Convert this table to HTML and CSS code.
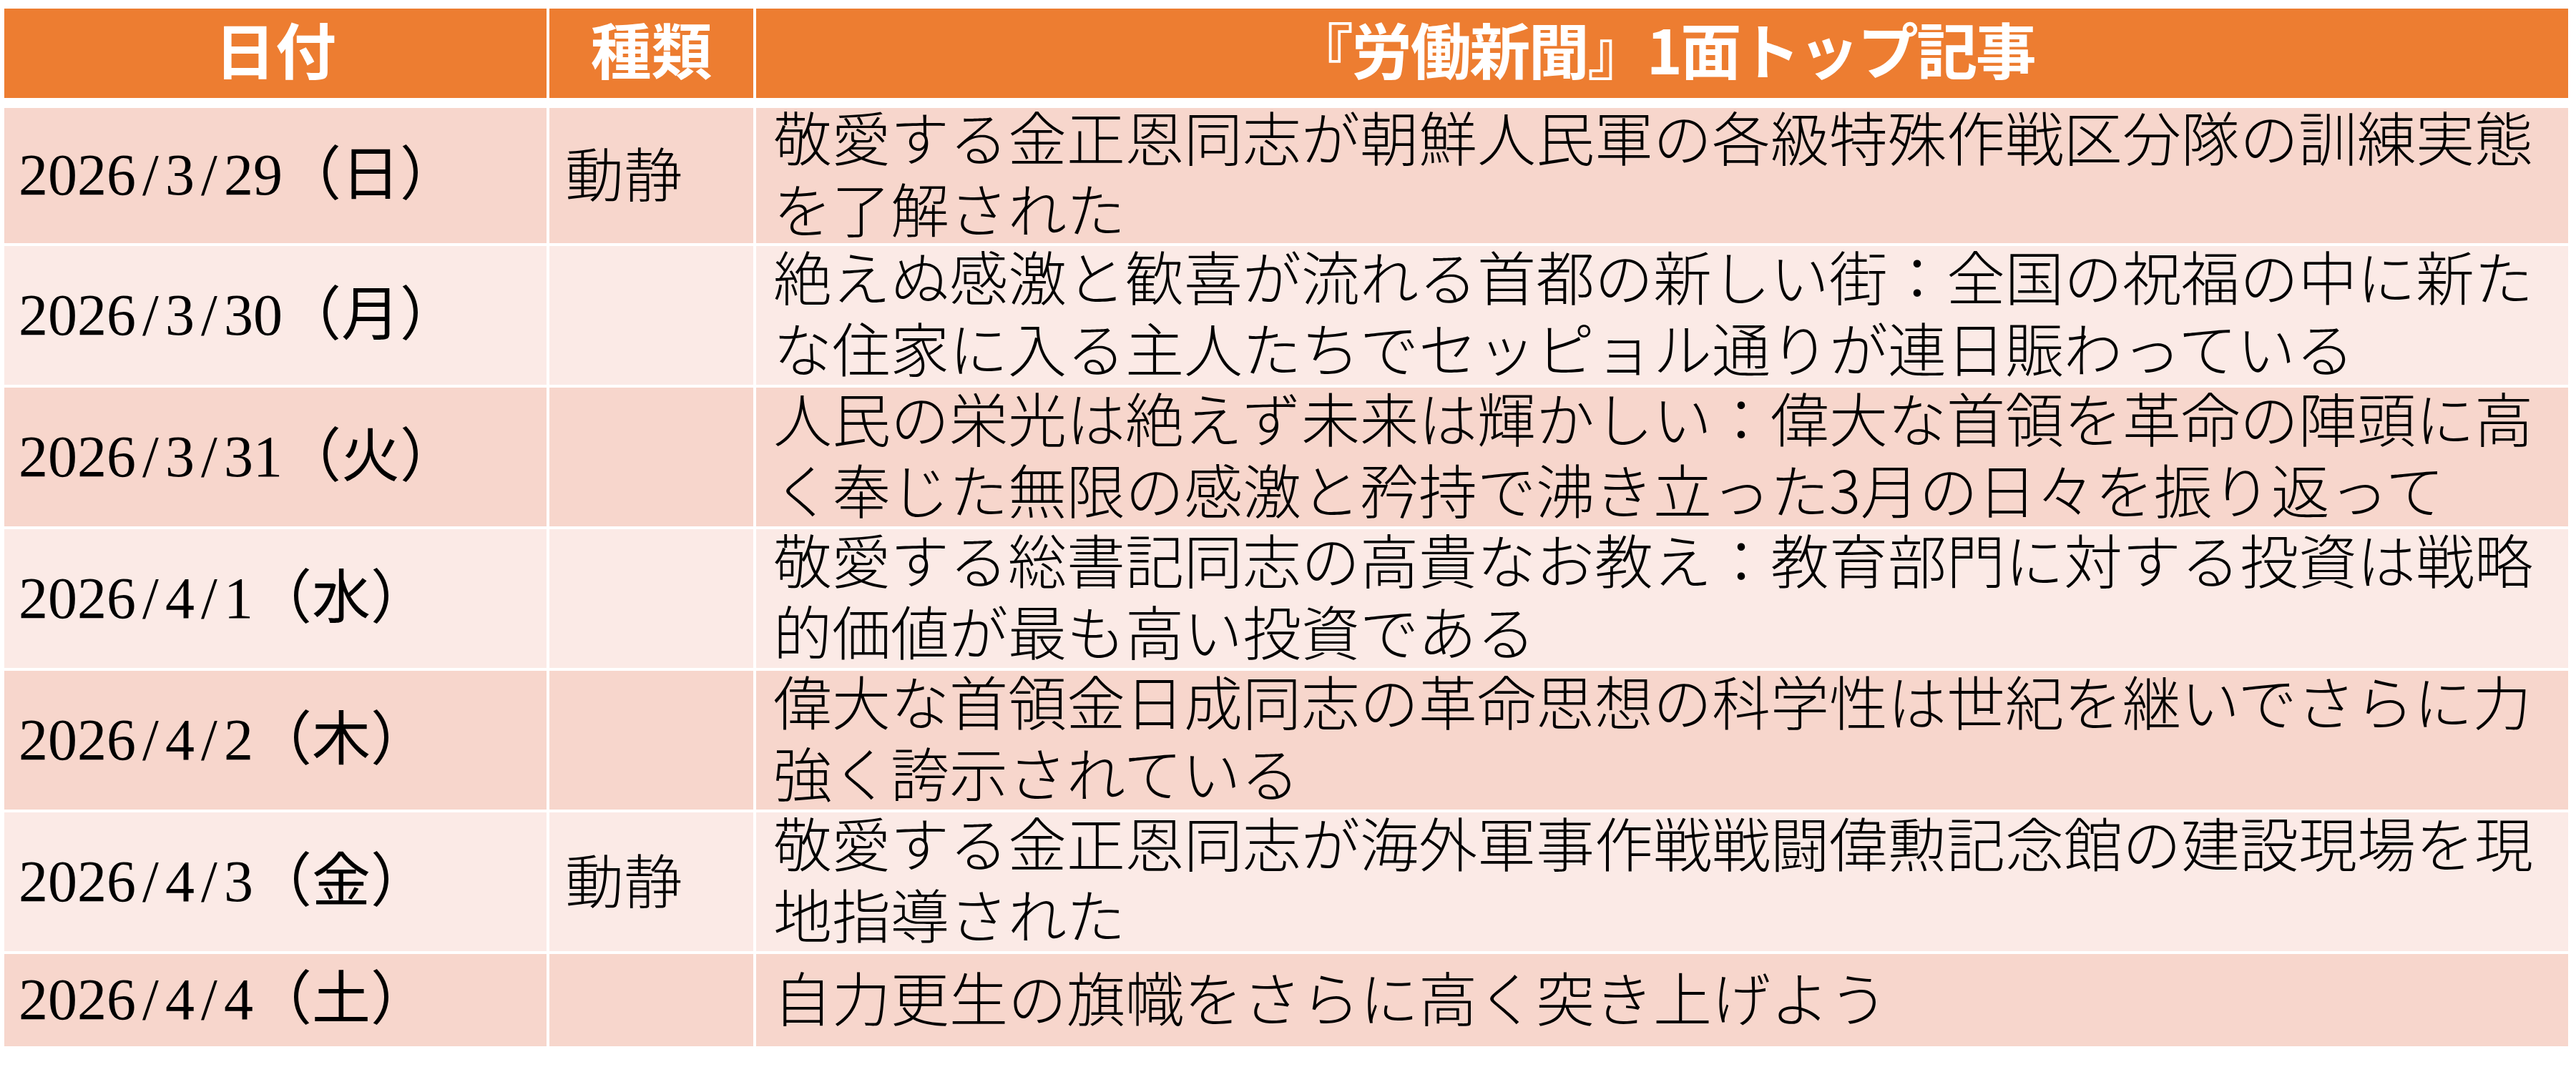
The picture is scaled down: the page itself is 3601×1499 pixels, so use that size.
FILE: index.html
```html
<!DOCTYPE html>
<html lang="ja">
<head>
<meta charset="utf-8">
<title>『労働新聞』1面トップ記事</title>
<link rel="stylesheet" href="styles.css">
</head>
<body>
<div class="table">
  <div class="th">日付</div>
  <div class="th">種類</div>
  <div class="th th-title">『労働新聞』1面トップ記事</div>

  <div class="td date odd">2026<span class="sl">/</span>3<span class="sl">/</span>29（日）</div>
  <div class="td kind odd">動静</div>
  <div class="td title odd">敬愛する金正恩同志が朝鮮人民軍の各級特殊作戦区分隊の訓練実態を了解された</div>

  <div class="td date even">2026<span class="sl">/</span>3<span class="sl">/</span>30（月）</div>
  <div class="td kind even"></div>
  <div class="td title even">絶えぬ感激と歓喜が流れる首都の新しい街：全国の祝福の中に新たな住家に入る主人たちでセッピョル通りが連日賑わっている</div>

  <div class="td date odd">2026<span class="sl">/</span>3<span class="sl">/</span>31（火）</div>
  <div class="td kind odd"></div>
  <div class="td title odd">人民の栄光は絶えず未来は輝かしい：偉大な首領を革命の陣頭に高く奉じた無限の感激と矜持で沸き立った3月の日々を振り返って</div>

  <div class="td date even">2026<span class="sl">/</span>4<span class="sl">/</span>1（水）</div>
  <div class="td kind even"></div>
  <div class="td title even">敬愛する総書記同志の高貴なお教え：教育部門に対する投資は戦略的価値が最も高い投資である</div>

  <div class="td date odd">2026<span class="sl">/</span>4<span class="sl">/</span>2（木）</div>
  <div class="td kind odd"></div>
  <div class="td title odd">偉大な首領金日成同志の革命思想の科学性は世紀を継いでさらに力強く誇示されている</div>

  <div class="td date even">2026<span class="sl">/</span>4<span class="sl">/</span>3（金）</div>
  <div class="td kind even">動静</div>
  <div class="td title even">敬愛する金正恩同志が海外軍事作戦戦闘偉勲記念館の建設現場を現地指導された</div>

  <div class="td date odd">2026<span class="sl">/</span>4<span class="sl">/</span>4（土）</div>
  <div class="td kind odd"></div>
  <div class="td title odd">自力更生の旗幟をさらに高く突き上げよう</div>
</div>
</body>
</html>
```

FILE: styles.css
```css
html, body {
  margin: 0;
  background: #ffffff;
}

body {
  padding: 12px 0 0 6px;
}

.table {
  display: grid;
  grid-template-columns: 758px 285px 2533px;
  grid-template-rows: 135px 189px repeat(5, 194px) 129px;
  gap: 4px;
  width: max-content;
}

.th {
  box-sizing: border-box;
  margin-bottom: 10px;
  padding-bottom: 16px;
  background: #ed7d31;
  color: #ffffff;
  font-family: "Noto Sans CJK JP", sans-serif;
  font-weight: 700;
  font-size: 85px;
  line-height: 1.2;
  display: flex;
  align-items: center;
  justify-content: center;
  white-space: nowrap;
}

.th-title {
  padding-left: 4px;
  letter-spacing: -2.5px;
}

.td {
  box-sizing: border-box;
  display: flex;
  align-items: center;
  color: #000000;
}

.odd {
  background: #f7d6cc;
}

.even {
  background: #fbeae6;
}

.date {
  padding-left: 20px;
  font-family: "Liberation Serif", "Noto Sans CJK JP", serif;
  font-weight: 400;
  font-size: 82px;
  line-height: 1.2;
  white-space: nowrap;
}

.sl {
  display: inline-block;
  width: 0.5em;
  text-align: center;
}

.kind {
  padding: 0 0 10px 22px;
  font-family: "Noto Sans CJK JP", sans-serif;
  font-weight: 300;
  font-size: 82px;
  line-height: 1.2;
}

.title {
  padding: 0 0 12px 24px;
  font-family: "Noto Sans CJK JP", sans-serif;
  font-weight: 300;
  font-size: 82px;
  line-height: 100px;
}
```
